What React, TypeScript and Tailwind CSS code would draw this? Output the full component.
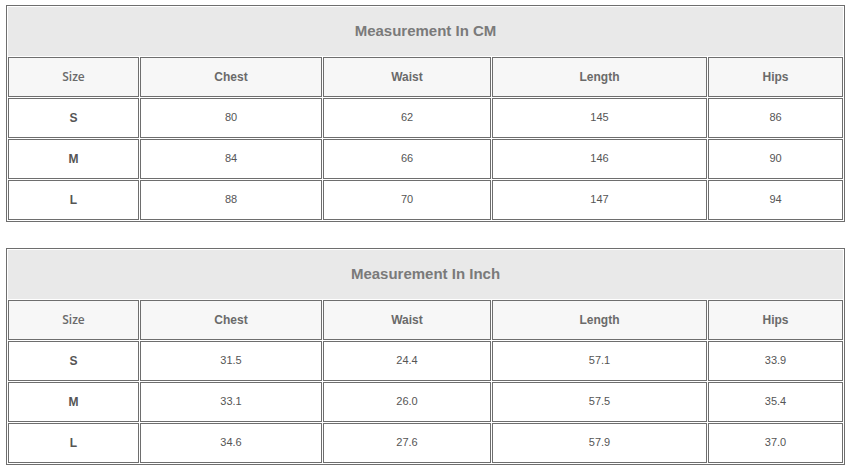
import React from "react";

const cols = ["Size", "Chest", "Waist", "Length", "Hips"];

function Table({ title, rows }: { title: string; rows: string[][] }) {
  return (
    <div className="ml-[6px] w-[839px] border border-[#6e6e6e] p-px bg-white">
      <div className="grid grid-cols-[131px_182px_168px_215px_135px] gap-px">
        <div className="col-span-5 h-[49px] bg-[#e9e9e9] flex items-center justify-center text-[15px] font-bold text-[#7a7a7a]">
          {title}
        </div>
        {cols.map((c, i) => (
          <div
            key={c}
            className={
              "h-[40px] border border-[#6e6e6e] bg-[#f7f7f7] flex items-center justify-center text-[12px] text-[#6a6a6a] " +
              (i === 0 ? "font-semibold" : "font-bold")
            }
            style={i === 0 ? { fontFamily: '"Open Sans", "Liberation Sans", sans-serif' } : undefined}
          >
            {c}
          </div>
        ))}
        {rows.map((r) =>
          r.map((v, i) => (
            <div
              key={r[0] + i}
              className={
                "h-[40px] border border-[#6e6e6e] bg-white flex items-center justify-center pb-px text-[#555] " +
                (i === 0 ? "text-[12px] font-bold" : "text-[11px]")
              }
            >
              {v}
            </div>
          ))
        )}
      </div>
    </div>
  );
}

export default function App() {
  return (
    <div
      className="w-[852px] h-[471px] bg-white pt-[5px]"
      style={{ fontFamily: '"Liberation Sans", Arial, sans-serif' }}
    >
      <Table
        title="Measurement In CM"
        rows={[
          ["S", "80", "62", "145", "86"],
          ["M", "84", "66", "146", "90"],
          ["L", "88", "70", "147", "94"],
        ]}
      />
      <div className="h-[26px]" />
      <Table
        title="Measurement In Inch"
        rows={[
          ["S", "31.5", "24.4", "57.1", "33.9"],
          ["M", "33.1", "26.0", "57.5", "35.4"],
          ["L", "34.6", "27.6", "57.9", "37.0"],
        ]}
      />
    </div>
  );
}
